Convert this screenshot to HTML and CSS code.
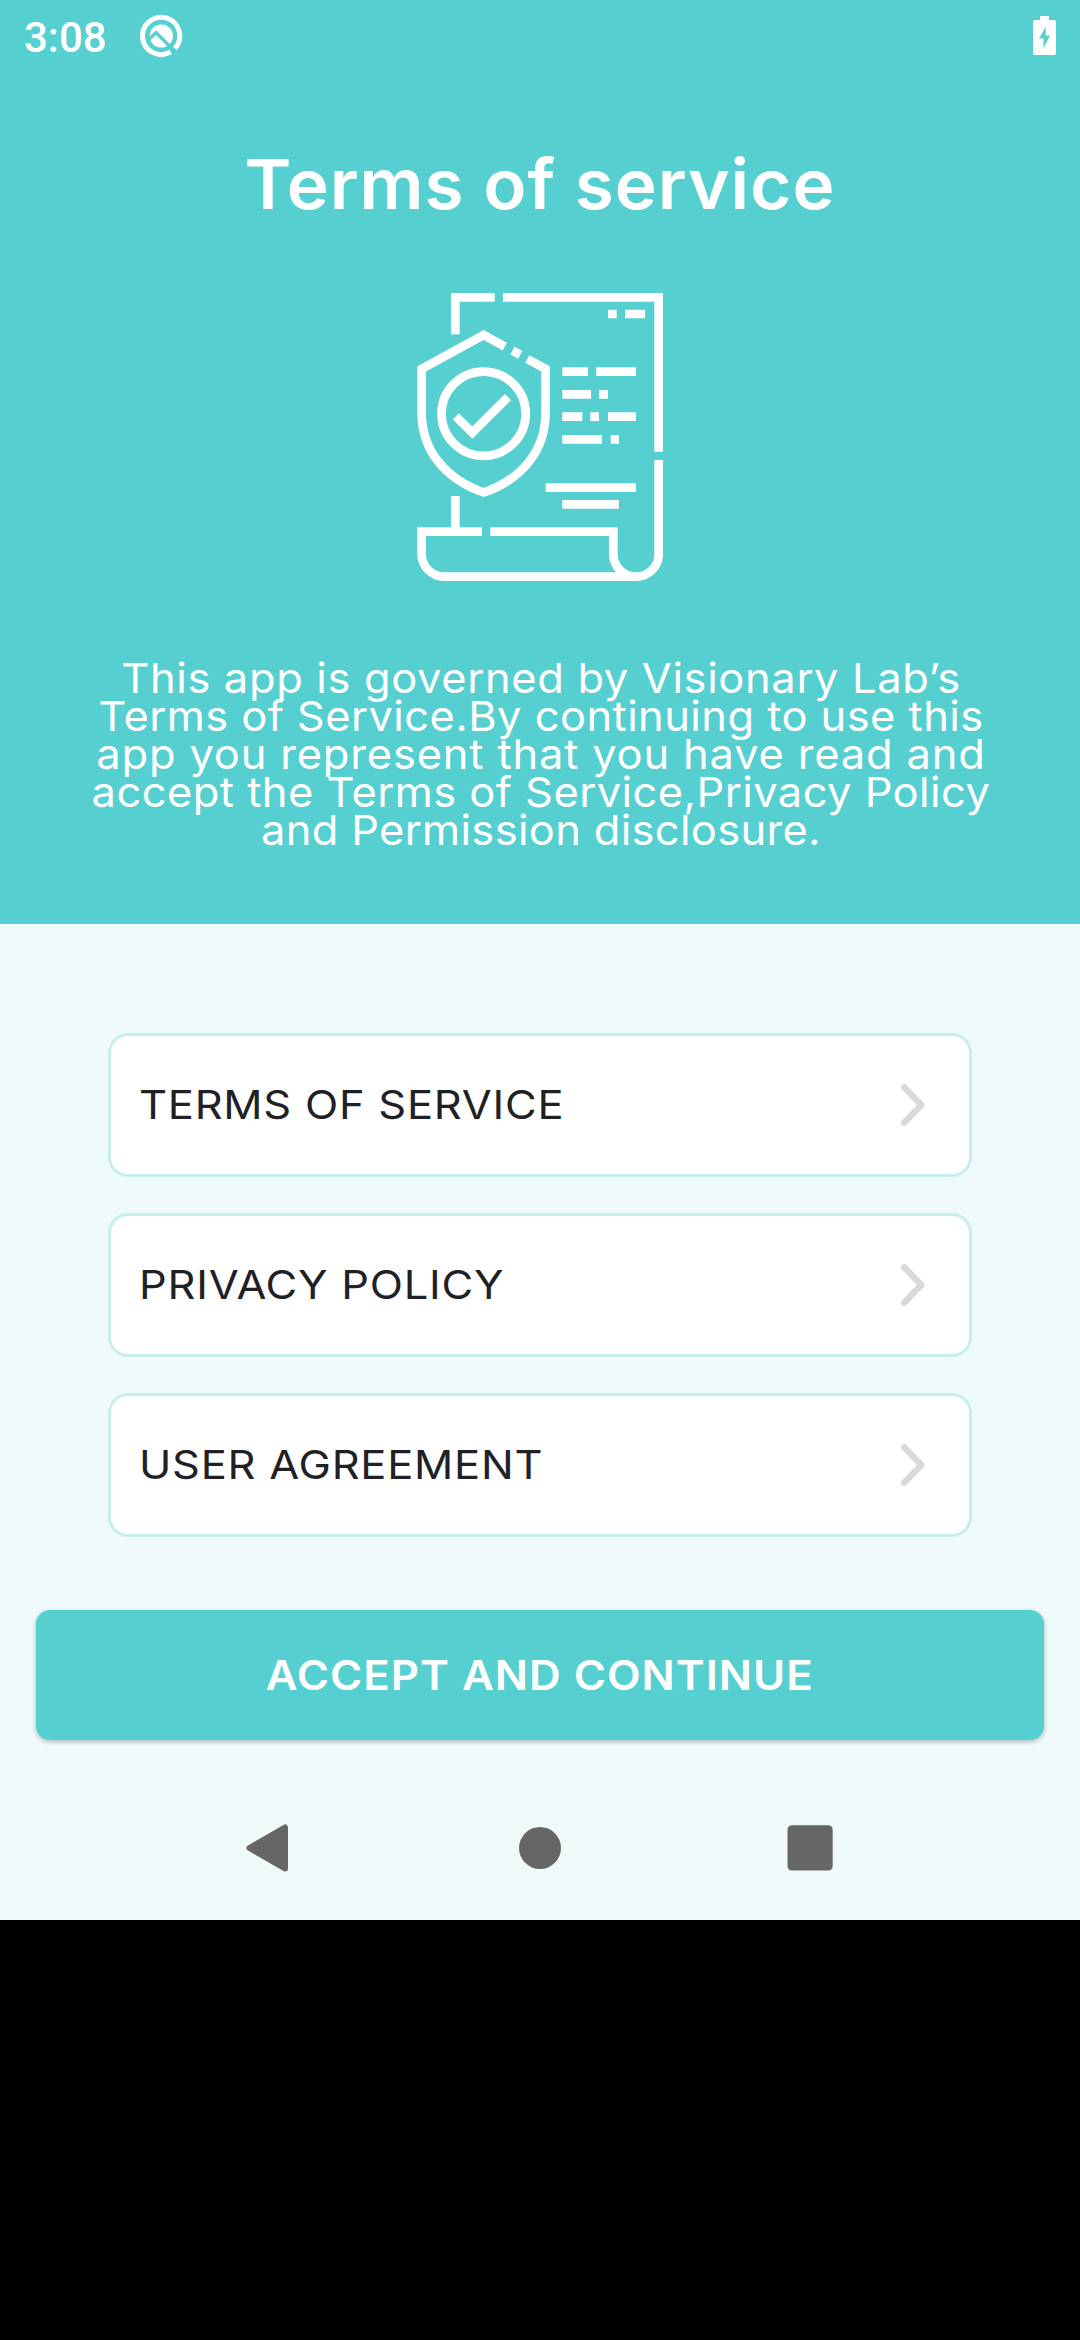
FILE: index.html
```
<!DOCTYPE html>
<html lang="en">
<head>
<meta charset="utf-8">
<title>Terms of service</title>
<link rel="stylesheet" href="styles.css">
</head>
<body>
<div class="screen">
  <header class="hero">
    <div class="status">
      <div class="status-left">
        <span class="clock">3:08</span>
        <svg class="notification" viewBox="0 0 44 44" aria-hidden="true">
          <path d="M31.600 37.900A18.600 18.600 0 1 1 35.800 34.500" fill="none" stroke="#fff" stroke-width="5"/>
          <circle cx="22.300" cy="22" r="11.600" fill="#fff"/>
          <path d="M10 25.300l7-6.700L36 37.500" fill="none" stroke="#56cfd0" stroke-width="3.400"/>
        </svg>
      </div>
      <svg class="battery" viewBox="0 0 23 39" aria-hidden="true">
        <path fill="#fff" fill-rule="evenodd" d="M7 0h9v4h5a2 2 0 0 1 2 2v31a2 2 0 0 1-2 2H2a2 2 0 0 1-2-2V6a2 2 0 0 1 2-2h5zM12.700 10.500L6 22.500h4.500v9.500l6.500-12.500h-4.300z"/>
      </svg>
    </div>
    <h1 class="title">Terms of service</h1>
    <svg class="illustration" viewBox="417 293 246 288" aria-hidden="true">
      <g fill="none" stroke="#fff" stroke-width="8.7">
        <path d="M455.300 334.300V297.300H494.700M503 297.300H658.700V451.700"/>
        <path d="M658.700 460V554A22.700 22.700 0 0 1 613.300 554V531.700H490.300"/>
        <path d="M482 531.700H421.600V554A23 22.700 0 0 0 444.500 576.700H636M455.300 496V531.700"/>
        <path d="M504.800 346.600L483.700 335L421.700 368.900V413C421.700 450 445 479 483.700 492.500C522.400 479 545.500 450 545.500 413V368.900L527.300 359M512.400 350.600L520.200 354.900"/>
        <circle cx="483.600" cy="413.700" r="42.100"/>
        <path d="M455.800 416.400L472.300 432.600L508 397"/>
        <path d="M608 314h8.700M625 314h20M562.300 371.700H588M596.300 371.700H636M562.300 394.300H591M599 394.300h9M562.300 416.700h20M590.300 416.700h8.700M608 416.700h28M562.300 439.300H602M610.700 439.300h8.300M545.700 487.700H636M562.300 504.300H619"/>
      </g>
    </svg>
    <p class="notice">
      <span class="line line-1">This app is governed by Visionary Lab’s</span>
      <span class="line line-2">Terms of Service.By continuing to use this</span>
      <span class="line line-3">app you represent that you have read and</span>
      <span class="line line-4">accept the Terms of Service,Privacy Policy</span>
      <span class="line line-5">and Permission disclosure.</span>
    </p>
  </header>
  <main class="content">
    <nav class="links">
      <a class="card"><span class="card-label">TERMS OF SERVICE</span>
        <svg class="chevron" viewBox="0 0 26 44"><path d="M4.200 4.200L21.300 22L4.200 39.800"/></svg></a>
      <a class="card"><span class="card-label">PRIVACY POLICY</span>
        <svg class="chevron" viewBox="0 0 26 44"><path d="M4.200 4.200L21.300 22L4.200 39.800"/></svg></a>
      <a class="card"><span class="card-label">USER AGREEMENT</span>
        <svg class="chevron" viewBox="0 0 26 44"><path d="M4.200 4.200L21.300 22L4.200 39.800"/></svg></a>
    </nav>
    <button class="accept"><span class="accept-label">ACCEPT AND CONTINUE</span></button>
  </main>
  <footer class="navbar">
    <svg class="nav-icon" viewBox="0 0 50 50"><path d="M4.500 25L40 4.500V45.500z" fill="#666" stroke="#666" stroke-width="6" stroke-linejoin="round"/></svg>
    <svg class="nav-icon" viewBox="0 0 50 50"><circle cx="25" cy="25" r="21" fill="#666"/></svg>
    <svg class="nav-icon" viewBox="0 0 50 50"><rect x="2.500" y="2.300" width="45.200" height="45.200" rx="4.500" fill="#666"/></svg>
  </footer>
</div>
</body>
</html>
```
FILE: styles.css
```
* { box-sizing: border-box; }

body {
  margin: 0;
  background: #000;
  font-family: Inter, "Liberation Sans", sans-serif;
}

.screen {
  display: flex;
  flex-direction: column;
  width: 1080px;
  height: 1920px;
  background: #eefbfa;
}

.hero {
  display: flex;
  flex-direction: column;
  align-items: center;
  height: 924px;
  background: #56cfd0;
  color: #fff;
}

.status {
  display: flex;
  justify-content: space-between;
  align-items: flex-start;
  width: 100%;
  height: 76px;
  padding: 0 24px;
}

.status-left { display: flex; gap: 32px; }

.clock {
  font: 500 42px/76px Roboto, sans-serif;
}

.notification { width: 44px; height: 44px; margin-top: 14px; }

.battery { width: 23px; height: 39px; margin-top: 16px; }

.title {
  margin: 66px 0 0;
  font-size: 69px;
  line-height: 84px;
  font-weight: 600;
  letter-spacing: 0.9px;
  transform: scaleX(1.03);
}

.illustration {
  flex: none;
  width: 246px;
  height: 288px;
  margin-top: 67px;
}

.notice {
  margin: 78px 0 0;
  padding-left: 1px;
  font-size: 41px;
  line-height: 38px;
  text-align: center;
  white-space: nowrap;
  transform: scaleX(1.06);
}

.line { display: block; }
.line-1 { letter-spacing: 0.61px; }
.line-2 { letter-spacing: 0.41px; }
.line-3 { letter-spacing: 0.77px; }
.line-4 { letter-spacing: 0.42px; }
.line-5 { letter-spacing: 0.31px; }

.content {
  display: flex;
  flex-direction: column;
  padding: 109px 36px 0;
}

.links {
  display: flex;
  flex-direction: column;
  gap: 36px;
  padding: 0 72px;
}

.card {
  display: flex;
  align-items: center;
  justify-content: space-between;
  height: 144px;
  padding: 0 43px 0 28px;
  border: 3px solid #c8eeec;
  border-radius: 20px;
  background: #fff;
  color: #212125;
}

.card-label {
  font-size: 39.5px;
  line-height: 48px;
  letter-spacing: 0.68px;
  transform: scaleX(1.1);
  transform-origin: left center;
}

.chevron {
  width: 26px;
  height: 44px;
  fill: none;
  stroke: #d9d9d9;
  stroke-width: 6.5px;
  stroke-linecap: round;
  stroke-linejoin: round;
}

.accept {
  height: 130px;
  margin-top: 73px;
  padding: 2px 0 0;
  border: 0;
  border-radius: 14px;
  background: #56cfd0;
  box-shadow: 0 2px 5px rgba(0, 0, 0, 0.25);
  color: #fff;
  font: 600 40.5px/48px Inter, "Liberation Sans", sans-serif;
}

.accept-label {
  display: inline-block;
  letter-spacing: 0.94px;
  transform: scaleX(1.08);
}

.navbar {
  display: flex;
  justify-content: center;
  gap: 220px;
  margin-top: 83px;
}

.nav-icon { width: 50px; height: 50px; }
```
